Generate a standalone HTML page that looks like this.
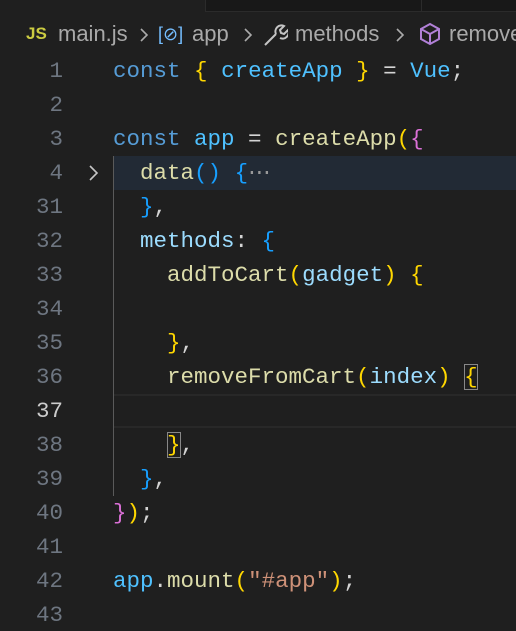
<!DOCTYPE html>
<html><head><style>
html,body{margin:0;width:516px;height:631px;overflow:hidden}
body{background:#1f1f1f;position:relative;font-family:"Liberation Mono",monospace}
.top{position:absolute;left:205px;top:0;width:311px;height:11px;background:#181818;border-bottom:1px solid #2b2b2b;border-left:1px solid #2b2b2b}
.top2{position:absolute;left:421px;top:0;width:1px;height:11px;background:#2b2b2b}
.bc{position:absolute;top:19px;left:0;width:516px;overflow:hidden;height:30px;font:22px "Liberation Sans",sans-serif;color:#a9a9a9;white-space:nowrap;line-height:30px}
.bc span{position:absolute;top:0}
.row{position:absolute;left:0;width:516px;height:34px;line-height:34px;font-size:22.5px;white-space:pre}
.ln{position:absolute;right:453px;color:#6e7681;text-align:right}
.code{position:absolute;left:113px;color:#d4d4d4}
.k{color:#569cd6}.v{color:#4fc1ff}.f{color:#dcdcaa}.p{color:#9cdcfe}.y{color:#ffd700}.m{color:#da70d6}.b{color:#179fff}.s{color:#ce9178}
.box{outline:1px solid #888;outline-offset:-1px}
</style></head><body>
<div class="top"></div><div class="top2"></div>
<div class="bc">
<span style="left:26px;color:#cbcb41;font-weight:bold;font-size:17px">JS</span>
<span style="left:58px">main.js</span>
<svg style="position:absolute;left:138px;top:8px" width="12" height="16" viewBox="0 0 12 16" fill="none" stroke="#aaa" stroke-width="1.6"><path d="M3 2l6 6-6 6"/></svg>
<span style="left:158px;color:#75beff;font-size:18px">[⊘]</span>
<span style="left:192px">app</span>
<svg style="position:absolute;left:242px;top:8px" width="12" height="16" viewBox="0 0 12 16" fill="none" stroke="#aaa" stroke-width="1.6"><path d="M3 2l6 6-6 6"/></svg>
<svg style="position:absolute;left:262px;top:3px" width="26" height="26" viewBox="0 0 26 26" fill="none" stroke="#c5c5c5" stroke-width="2"><path d="M3 23l11-11M14 12a6 6 0 0 1 8-8l-4 4 1 3 3 1 4-4a6 6 0 0 1-8 8"/></svg>
<span style="left:295px">methods</span>
<svg style="position:absolute;left:394px;top:8px" width="12" height="16" viewBox="0 0 12 16" fill="none" stroke="#aaa" stroke-width="1.6"><path d="M3 2l6 6-6 6"/></svg>
<svg style="position:absolute;left:418px;top:3px" width="24" height="24" viewBox="0 0 24 24" fill="none" stroke="#b180d7" stroke-width="2"><path d="M12 2l9 5v10l-9 5-9-5V7zM3 7l9 5 9-5M12 12v10"/></svg>
<span style="left:449px">removeFromCart</span>
</div>
<div style="position:absolute;left:113px;top:156px;width:403px;height:34px;background:#222a35"></div>
<div style="position:absolute;left:113px;top:394px;width:403px;height:34px;border-top:2px solid #282828;border-bottom:2px solid #282828;box-sizing:border-box"></div>
<div style="position:absolute;left:113px;top:156px;width:1px;height:340px;background:#5a5a5a"></div>
<svg style="position:absolute;left:86px;top:163px" width="14" height="20" viewBox="0 0 14 20" fill="none" stroke="#c5c5c5" stroke-width="1.6"><path d="M4 3l7 7-7 7"/></svg>
<div class="row" style="top:54px"><span class="ln">1</span><span class="code"><span class="k">const</span> <span class="y">{</span> <span class="v">createApp</span> <span class="y">}</span> = <span class="v">Vue</span>;</span></div>
<div class="row" style="top:88px"><span class="ln">2</span></div>
<div class="row" style="top:122px"><span class="ln">3</span><span class="code"><span class="k">const</span> <span class="v">app</span> = <span class="f">createApp</span><span class="y">(</span><span class="m">{</span></span></div>
<div class="row" style="top:156px"><span class="ln">4</span><span class="code">  <span class="f">data</span><span class="b">()</span> <span class="b">{</span><span style="color:#999">⋯</span></span></div>
<div class="row" style="top:190px"><span class="ln">31</span><span class="code">  <span class="b">}</span>,</span></div>
<div class="row" style="top:224px"><span class="ln">32</span><span class="code">  <span class="p">methods</span>: <span class="b">{</span></span></div>
<div class="row" style="top:258px"><span class="ln">33</span><span class="code">    <span class="f">addToCart</span><span class="y">(</span><span class="p">gadget</span><span class="y">)</span> <span class="y">{</span></span></div>
<div class="row" style="top:292px"><span class="ln">34</span></div>
<div class="row" style="top:326px"><span class="ln">35</span><span class="code">    <span class="y">}</span>,</span></div>
<div class="row" style="top:360px"><span class="ln">36</span><span class="code">    <span class="f">removeFromCart</span><span class="y">(</span><span class="p">index</span><span class="y">)</span> <span class="y box">{</span></span></div>
<div class="row" style="top:394px"><span class="ln" style="color:#ccc">37</span></div>
<div class="row" style="top:428px"><span class="ln">38</span><span class="code">    <span class="y box">}</span>,</span></div>
<div class="row" style="top:462px"><span class="ln">39</span><span class="code">  <span class="b">}</span>,</span></div>
<div class="row" style="top:496px"><span class="ln">40</span><span class="code"><span class="m">}</span><span class="y">)</span>;</span></div>
<div class="row" style="top:530px"><span class="ln">41</span></div>
<div class="row" style="top:564px"><span class="ln">42</span><span class="code"><span class="v">app</span>.<span class="f">mount</span><span class="y">(</span><span class="s">"#app"</span><span class="y">)</span>;</span></div>
<div class="row" style="top:598px"><span class="ln">43</span></div>
</body></html>
